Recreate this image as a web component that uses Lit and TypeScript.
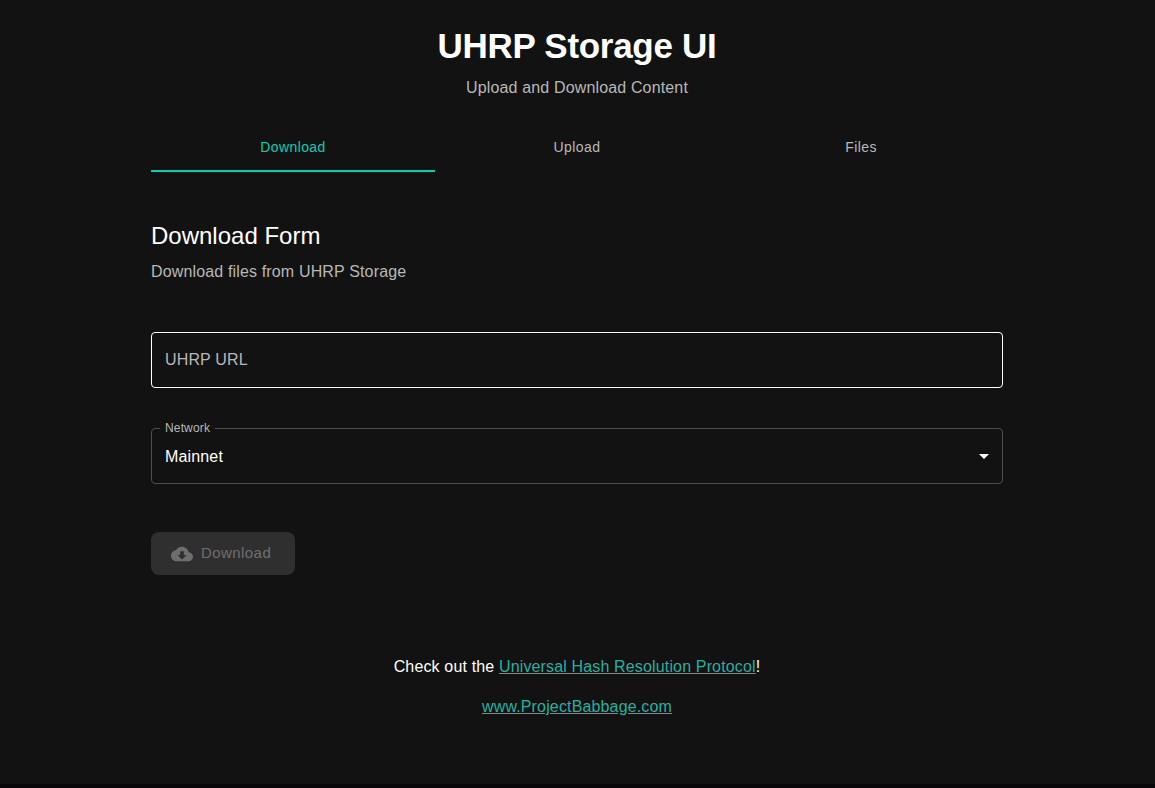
import { LitElement, html, css } from "lit";
import { customElement, state } from "lit/decorators.js";

@customElement("app-root")
export class AppRoot extends LitElement {
  static styles = css`
    :host {
      display: block;
      box-sizing: border-box;
      height: 788px;
      overflow: hidden;
      background: #121212;
      border-bottom: 4px solid #0a070b;
      color: #fff;
      font: 400 16px/24px "Liberation Sans", Arial, sans-serif;
      letter-spacing: 0.15px;
    }
    * { box-sizing: border-box; }
    .page { width: 852px; margin-left: 151px; padding-top: 24px; }
    header { text-align: center; }
    h1, h2, p { margin: 0; }
    h1 { font-size: 35px; line-height: 42px; font-weight: 700; letter-spacing: -0.29px; padding-top: 1px; }
    h2 { font-size: 24px; line-height: 32px; font-weight: 400; letter-spacing: 0; }
    .muted { color: #b8b8b8; }
    header .muted { margin-top: 9px; }
    .tabs { display: grid; grid-template-columns: repeat(3, 1fr); height: 48px; margin-top: 24px; }
    .tab {
      background: none; border: 0; border-bottom: 2px solid transparent;
      padding: 0; color: #b8b8b8; font: 400 14px/17px "Liberation Sans", Arial, sans-serif;
      letter-spacing: 0.4px;
    }
    .tab.active { color: #00d1b2; border-color: #00d1b2; }
    .form { padding-top: 48px; }
    .form .muted { margin-top: 8px; }
    .field {
      display: flex; align-items: center; height: 56px; margin-top: 48px;
      border: 1px solid #fff; border-radius: 4px; padding: 0 13px; color: #b8b8b8;
    }
    .select {
      height: 62px; min-width: 0; margin: 34px 0 0; padding: 0 6px 0 13px;
      border: 1px solid #4d4d4d; border-radius: 4px; color: #fff;
    }
    .select legend {
      margin-left: -5px; padding: 0 5px; font-size: 12px; line-height: 12px;
      color: #b8b8b8; height: 13px;
    }
    .value { display: flex; align-items: center; justify-content: space-between; height: 43px; }
    .value span { padding-top: 1px; }
    .arrow { width: 24px; height: 24px; margin-bottom: 2px; fill: #fff; }
    .submit {
      display: flex; align-items: center; width: 144px; height: 43px; margin-top: 48px;
      padding: 0 20px; border: 0; border-radius: 8px; background: #2f2f2f; color: #6e6e6e;
      font: 400 15px/26px "Liberation Sans", Arial, sans-serif; letter-spacing: 0.43px;
    }
    .submit svg { width: 22px; height: 22px; margin-right: 8px; fill: currentColor; flex: none; }
    .submit span { padding-bottom: 2px; }
    footer { text-align: center; margin-top: 80px; }
    footer p + p { margin-top: 16px; }
    a { color: #20b2a6; text-decoration: underline; }
  `;

  @state() private active = "Download";

  render() {
    return html`
      <main class="page">
        <header>
          <h1>UHRP Storage UI</h1>
          <p class="muted">Upload and Download Content</p>
        </header>
        <nav class="tabs">
          ${["Download", "Upload", "Files"].map(
            (t) => html`<button class="tab ${t === this.active ? "active" : ""}" @click=${() => (this.active = t)}>${t}</button>`
          )}
        </nav>
        <section class="form">
          <h2>Download Form</h2>
          <p class="muted">Download files from UHRP Storage</p>
          <div class="field">UHRP URL</div>
          <fieldset class="select">
            <legend>Network</legend>
            <div class="value">
              <span>Mainnet</span>
              <svg class="arrow" viewBox="0 0 24 24"><path d="M7 10l5 5 5-5z" /></svg>
            </div>
          </fieldset>
          <button class="submit" disabled>
            <svg viewBox="0 0 24 24"><path d="M19.35 10.04C18.67 6.59 15.64 4 12 4 9.11 4 6.6 5.64 5.35 8.04 2.34 8.36 0 10.91 0 14c0 3.31 2.69 6 6 6h13c2.76 0 5-2.24 5-5 0-2.64-2.05-4.78-4.65-4.96zM17 13l-5 5-5-5h3V9h4v4h3z" /></svg>
            <span>Download</span>
          </button>
        </section>
        <footer>
          <p>Check out the <a>Universal Hash Resolution Protocol</a>!</p>
          <p><a>www.ProjectBabbage.com</a></p>
        </footer>
      </main>
    `;
  }
}
